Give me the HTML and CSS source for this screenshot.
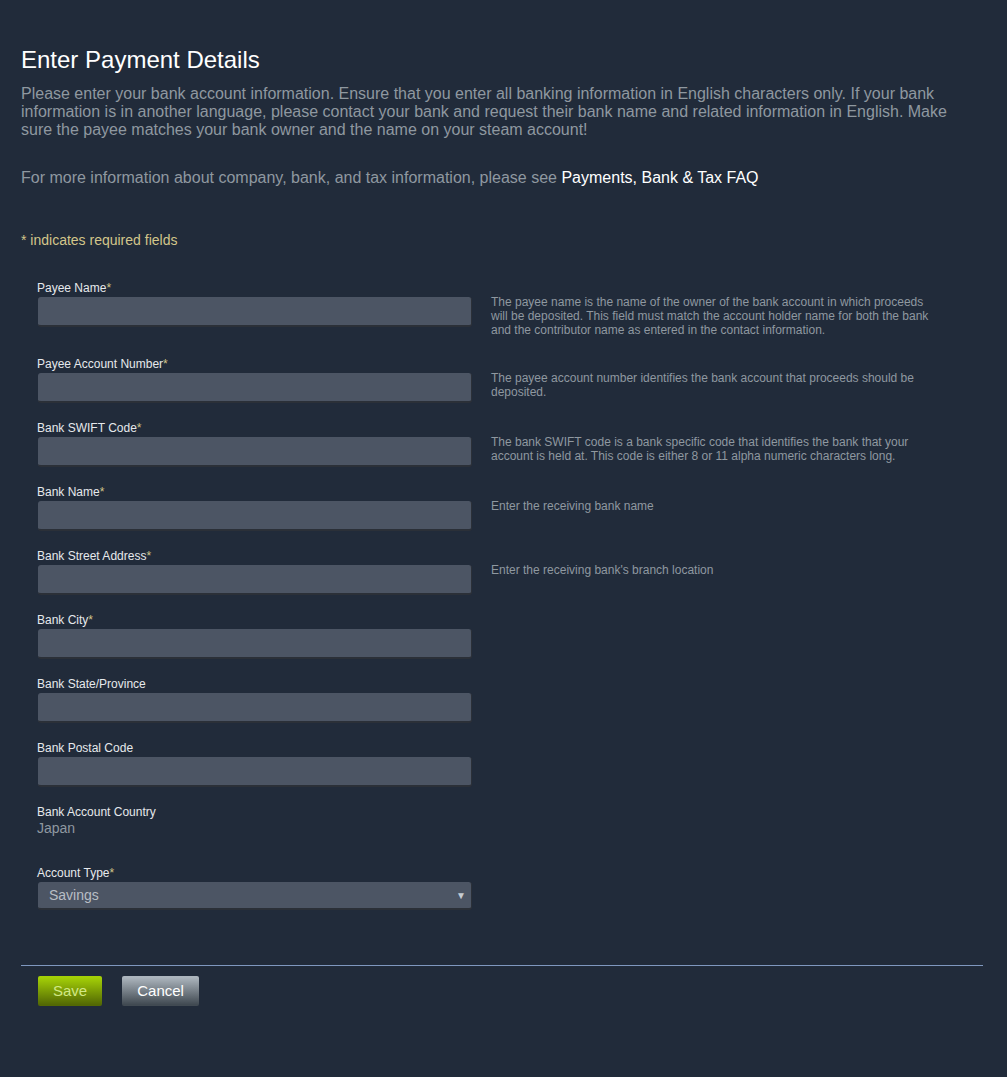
FILE: index.html
```html
<!DOCTYPE html>
<html>
<head>
<meta charset="utf-8">
<link rel="stylesheet" href="styles.css">
</head>
<body>
<div class="page">
  <h1 class="title">Enter Payment Details</h1>
  <p class="intro">Please enter your bank account information. Ensure that you enter all banking information in English characters only. If your bank information is in another language, please contact your bank and request their bank name and related information in English. Make sure the payee matches your bank owner and the name on your steam account!</p>
  <p class="intro more">For more information about company, bank, and tax information, please see <a class="link" href="#">Payments, Bank &amp; Tax FAQ</a></p>
  <p class="required-note">* indicates required fields</p>

  <div class="form">
    <div class="row">
      <div class="field">
        <div class="label">Payee Name<span class="req">*</span></div>
        <div class="input"></div>
      </div>
      <div class="help">The payee name is the name of the owner of the bank account in which proceeds will be deposited. This field must match the account holder name for both the bank and the contributor name as entered in the contact information.</div>
    </div>
    <div class="row">
      <div class="field">
        <div class="label">Payee Account Number<span class="req">*</span></div>
        <div class="input"></div>
      </div>
      <div class="help">The payee account number identifies the bank account that proceeds should be deposited.</div>
    </div>
    <div class="row">
      <div class="field">
        <div class="label">Bank SWIFT Code<span class="req">*</span></div>
        <div class="input"></div>
      </div>
      <div class="help">The bank SWIFT code is a bank specific code that identifies the bank that your account is held at. This code is either 8 or 11 alpha numeric characters long.</div>
    </div>
    <div class="row">
      <div class="field">
        <div class="label">Bank Name<span class="req">*</span></div>
        <div class="input"></div>
      </div>
      <div class="help">Enter the receiving bank name</div>
    </div>
    <div class="row">
      <div class="field">
        <div class="label">Bank Street Address<span class="req">*</span></div>
        <div class="input"></div>
      </div>
      <div class="help">Enter the receiving bank's branch location</div>
    </div>
    <div class="row">
      <div class="field">
        <div class="label">Bank City<span class="req">*</span></div>
        <div class="input"></div>
      </div>
    </div>
    <div class="row">
      <div class="field">
        <div class="label">Bank State/Province</div>
        <div class="input"></div>
      </div>
    </div>
    <div class="row">
      <div class="field">
        <div class="label">Bank Postal Code</div>
        <div class="input"></div>
      </div>
    </div>
    <div class="row country-row">
      <div class="field">
        <div class="label">Bank Account Country</div>
        <div class="value">Japan</div>
      </div>
    </div>
    <div class="row">
      <div class="field">
        <div class="label">Account Type<span class="req">*</span></div>
        <div class="select"><span>Savings</span><span class="arrow">▼</span></div>
      </div>
    </div>
  </div>

  <div class="divider"></div>
  <div class="buttons">
    <a class="btn btn-green" href="#">Save</a>
    <a class="btn btn-grey" href="#">Cancel</a>
  </div>
</div>
</body>
</html>
```

FILE: styles.css
```css
html, body {
  margin: 0;
  padding: 0;
  background: #212b3a;
}
body {
  font-family: "Liberation Sans", Arial, sans-serif;
  color: #8f98a0;
}
.page {
  padding: 46px 24px 60px 21px;
}
.title {
  margin: 0;
  font-size: 24px;
  line-height: 28px;
  font-weight: normal;
  color: #ffffff;
}
.intro {
  margin: 11px 0 0 0;
  font-size: 16px;
  line-height: 18px;
  color: #8f98a0;
  max-width: 940px;
}
.intro.more {
  margin-top: 30px;
}
.link {
  color: #ffffff;
  text-decoration: none;
}
.required-note {
  margin: 44px 0 0 0;
  font-size: 14px;
  line-height: 18px;
  color: #d3c68a;
}
.form {
  margin-top: 32px;
  padding-left: 16px;
}
.row {
  display: flex;
  gap: 19px;
  margin-bottom: 18px;
}
.field {
  width: 435px;
  flex: none;
}
.label {
  font-size: 12px;
  line-height: 14px;
  color: #e6e9ec;
}
.req {
  color: #d3c68a;
}
.input {
  margin: 2px 0 0 1px;
  height: 28px;
  background: #4c5564;
  border-radius: 3px;
  border-right: 1px solid #2b3038;
  border-bottom: 2px solid #2b3038;
}
.help {
  width: 450px;
  padding-top: 14px;
  padding-bottom: 2px;
  font-size: 12px;
  line-height: 14px;
  color: #8f98a0;
}
.country-row {
  margin-bottom: 30px;
}
.value {
  margin-top: 1px;
  font-size: 14px;
  line-height: 16px;
  color: #8f98a0;
}
.select {
  margin: 2px 0 0 1px;
  height: 26px;
  background: #4c5564;
  border-radius: 3px;
  border-right: 1px solid #2b3038;
  border-bottom: 2px solid #2b3038;
  display: flex;
  align-items: center;
  justify-content: space-between;
  padding: 0 5px 0 11px;
  font-size: 14px;
  color: #b8bec4;
}
.arrow {
  font-size: 10px;
  color: #c6ccd2;
}
.divider {
  margin-top: 55px;
  height: 1px;
  background: #7f98bf;
}
.buttons {
  display: flex;
  gap: 20px;
  margin-top: 10px;
  padding-left: 17px;
}
.btn {
  display: block;
  height: 30px;
  line-height: 30px;
  padding: 0 15px;
  font-size: 15px;
  border-radius: 2px;
  text-decoration: none;
}
.btn-green {
  background: linear-gradient(to bottom, #a4d007 5%, #536904 95%);
  color: #d2e885;
}
.btn-grey {
  background: linear-gradient(to bottom, #acb5bd 5%, #414a52 95%);
  color: #ffffff;
}
```
